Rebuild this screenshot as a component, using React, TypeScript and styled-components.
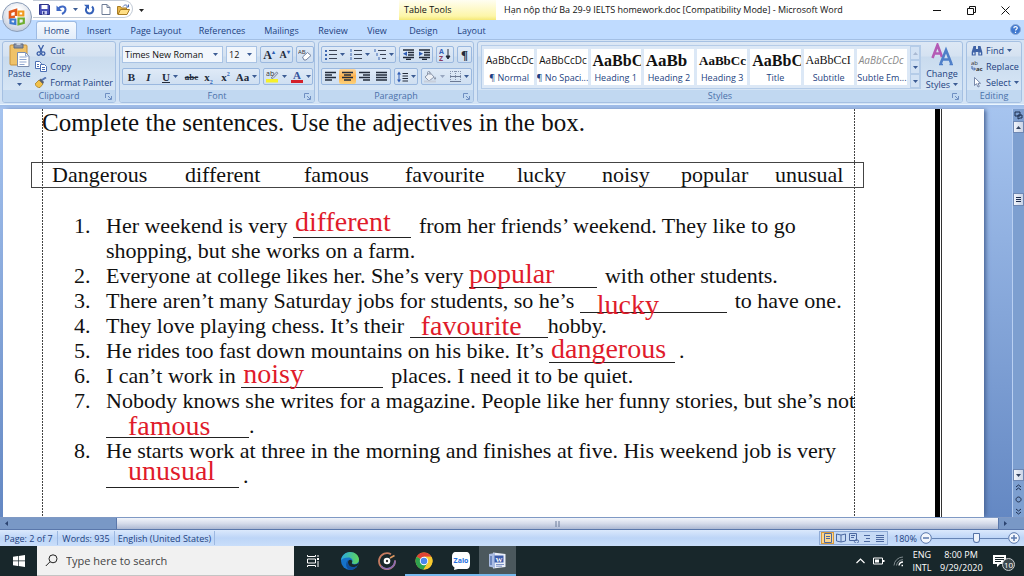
import React from "react";
import styled, { createGlobalStyle, css } from "styled-components";

const ui = `"Open Sans", "Noto Sans", sans-serif`;
const serif = `"Liberation Serif", "Times New Roman", serif`;
const navy = "#1d3f80";

const GlobalStyle = createGlobalStyle`
  * { box-sizing: border-box; }
  body { margin: 0; background: #8fb0df; font-family: ${ui}; font-size: 9px; color: ${navy}; }
  button, input, select { font: inherit; color: inherit; margin: 0; }
  button { padding: 0; border: 0; background: none; }
  svg { display: block; flex: none; }
`;

const Shell = styled.div`
  display: flex;
  flex-direction: column;
  min-height: 100vh;
`;

/* ---------- title bar and tabs ---------- */

const Header = styled.header`
  position: relative;
`;

const TitleBar = styled.div`
  display: flex;
  height: 20px;
  background: #fff;
  color: #111;
`;

const QuickAccess = styled.div`
  display: flex;
  align-items: center;
  gap: 6px;
  width: 100px;
  height: 18px;
  margin-left: 33px;
  padding-left: 6px;
  border: 1px solid #c3cbd6;
  border-left: 0;
  border-radius: 0 9px 9px 0;
`;

const QuickMore = styled.button`
  width: 16px;
  display: grid;
  place-items: center;
`;

const OfficeButton = styled.button`
  position: absolute;
  left: 2px;
  top: 2px;
  width: 30px;
  height: 30px;
  border-radius: 50%;
  border: 1px solid #8b9db8;
  background: radial-gradient(circle at 50% 35%, #ffffff 20%, #d9dee8 60%, #aab8cf);
  display: grid;
  place-items: center;
`;

const ContextTitle = styled.div`
  width: 97px;
  margin-left: 250px;
  padding-left: 5px;
  line-height: 20px;
  background: linear-gradient(#fffef2, #fdf6a9 80%, #f4e878);
`;

const WindowTitle = styled.h1`
  flex: 1;
  margin: 0;
  padding-left: 8px;
  font-size: 9px;
  font-weight: 400;
  line-height: 20px;
  white-space: nowrap;
`;

const WindowButtons = styled.div`
  display: flex;
  align-items: center;
  gap: 25px;
  padding-right: 14px;
`;

const TabBar = styled.nav`
  display: flex;
  align-items: flex-end;
  height: 19px;
  padding: 0 3px 0 36px;
  background: #bfdbff;
`;

const Tab = styled.button<{ $w: number; $active?: boolean }>`
  width: ${(p) => p.$w}px;
  height: 18px;
  white-space: nowrap;
  ${(p) =>
    p.$active &&
    css`
      background: linear-gradient(#f6faff, #e2edfa);
      border: 1px solid #9dbbe4;
      border-bottom: 0;
      border-radius: 3px 3px 0 0;
    `}
`;

const Spacer = styled.div`
  flex: 1;
`;

const HelpButton = styled.button`
  align-self: center;
`;

/* ---------- ribbon ---------- */

const Ribbon = styled.div`
  display: flex;
  gap: 3px;
  height: 66px;
  padding: 1px 2px;
  background: #d3e3f5;
  border-top: 1px solid #a3bfe4;
  border-bottom: 1px solid #e9f5ff;
`;

const RibbonEdge = styled.div`
  height: 4px;
  background: linear-gradient(#9dbce8, #a9c4ee);
`;

const Group = styled.section<{ $w?: number }>`
  display: flex;
  flex-direction: column;
  ${(p) => (p.$w ? `width: ${p.$w}px; flex: none;` : "flex: 1; min-width: 0;")}
  border: 1px solid #a5c0e2;
  border-radius: 3px;
  overflow: hidden;
  background: linear-gradient(#dde8f5 0, #d5e2f1 14px, #c9dbee 15px, #dbe9f8);
`;

const GroupBody = styled.div`
  flex: 1;
  display: flex;
  padding: 0 2px;
`;

const GroupLabel = styled.div`
  position: relative;
  height: 12px;
  line-height: 12px;
  text-align: center;
  background: #c1d8f1;
  color: #4a70aa;
`;

const Launcher = styled.button`
  position: absolute;
  right: 3px;
  top: 3px;
`;

const Stack = styled.div<{ $gap?: number; $pad?: string }>`
  display: flex;
  flex-direction: column;
  gap: ${(p) => p.$gap ?? 0}px;
  padding: ${(p) => p.$pad ?? "0"};
`;

const Row = styled.div<{ $gap?: number }>`
  display: flex;
  gap: ${(p) => p.$gap ?? 3}px;
`;

const BigButton = styled.button<{ $w: number }>`
  display: flex;
  flex-direction: column;
  align-items: center;
  width: ${(p) => p.$w}px;
  line-height: 11px;
  > svg:first-child { margin: 1px 0; }
  > svg:last-child { margin-top: 4px; }
`;

const ButtonArrow = styled.span`
  display: grid;
  place-items: center;
`;

const ItemButton = styled.button`
  display: flex;
  align-items: center;
  gap: 3px;
  height: 16px;
  white-space: nowrap;
  > svg:first-child { width: 12px; }
`;

const Box = styled.div`
  display: flex;
  height: 17px;
  border: 1px solid #9ab8df;
  border-radius: 2px;
  background: linear-gradient(#dfeaf7, #cfdff1);
`;

const Tool = styled.button<{ $w?: number; $on?: boolean }>`
  display: flex;
  align-items: center;
  justify-content: center;
  gap: 3px;
  width: ${(p) => p.$w ?? 17}px;
  height: 15px;
  color: #222b3a;
  ${(p) => p.$on && "background: linear-gradient(#fdd9a0, #fbb04c 50%, #fdd27b); border-radius: 2px;"}
`;

const Glyph = styled.span<{ $bold?: boolean; $italic?: boolean; $line?: string; $size?: number }>`
  font-family: ${serif};
  font-size: ${(p) => p.$size ?? 11}px;
  line-height: 12px;
  font-weight: ${(p) => (p.$bold ? 700 : 400)};
  font-style: ${(p) => (p.$italic ? "italic" : "normal")};
  text-decoration: ${(p) => p.$line ?? "none"};
  sup, sub { font-size: 6px; line-height: 0; color: #2b5fb5; }
`;

const SelectWrap = styled.label<{ $w: number }>`
  display: flex;
  align-items: center;
  position: relative;
  width: ${(p) => p.$w}px;
  height: 17px;
  background: #f1f6fc;
  border: 1px solid #a9c3e4;
  select {
    appearance: none;
    width: 100%;
    height: 15px;
    padding: 0 2px;
    border: 0;
    background: none;
    color: #111;
  }
  svg { position: absolute; right: 4px; pointer-events: none; }
`;

const Gallery = styled.div`
  flex: 1;
  min-width: 0;
  display: flex;
  gap: 3px;
  height: 44px;
  padding-left: 2px;
  margin: 3px 3px 0 1px;
  border: 1px solid #b5cce8;
  background: #dce8f6;
`;

const StyleCard = styled.button`
  display: flex;
  flex-direction: column;
  align-items: center;
  flex: 1 1 0;
  min-width: 0;
  height: 36px;
  margin-top: 3px;
  background: #fff;
  overflow: hidden;
  white-space: nowrap;
  line-height: 12px;
`;

const Sample = styled.span<{ $size: number; $serif?: boolean; $bold?: boolean; $soft?: boolean }>`
  width: 100%;
  padding-left: 2px;
  height: 23px;
  line-height: 23px;
  text-align: left;
  overflow: hidden;
  font-size: ${(p) => p.$size}px;
  font-family: ${(p) => (p.$serif ? serif : ui)};
  font-weight: ${(p) => (p.$bold ? 700 : 400)};
  color: ${(p) => (p.$soft ? "#8a8a8a" : "#111")};
  font-style: ${(p) => (p.$soft ? "italic" : "normal")};
`;

const GalleryScroll = styled.div`
  display: flex;
  flex-direction: column;
  width: 10px;
  button {
    flex: 1;
    display: grid;
    place-items: center;
    border: 1px solid #b5cce8;
    background: #d3e2f4;
  }
`;

/* ---------- document ---------- */

const Workspace = styled.main`
  flex: 1;
  display: flex;
  background: linear-gradient(#a6c4ef, #6488c3);
`;

const Page = styled.article`
  flex: 1;
  min-width: 0;
  display: flex;
  margin-left: 3px;
  background: #fff;
  color: #111;
  font-family: ${serif};
  font-size: 22px;
  line-height: 25px;
  box-shadow: 3px 0 4px -1px #4b6798;
`;

const LeftMargin = styled.div`
  width: 39px;
`;

const dots = "repeating-linear-gradient(#444 0 2px, #fff 2px 3px)";

const TextColumn = styled.div`
  flex: 1;
  min-width: 0;
  padding: 0 1px 0 0;
  background: ${dots} left / 1px 100% no-repeat, ${dots} right / 1px 100% no-repeat;
`;

const RightMargin = styled.div`
  width: 80px;
`;

const PageRule = styled.div`
  width: 7px;
  margin-right: 42px;
  border-left: 5px solid #000;
  border-right: 1px solid #333;
`;

const DocHeading = styled.h2`
  margin: 0 0 25px;
  font-size: 25px;
  line-height: 28px;
  font-weight: 400;
  white-space: nowrap;
`;

const WordBox = styled.div`
  display: grid;
  grid-template-columns: 133fr 119fr 101fr 112fr 85fr 79fr 94fr 69fr;
  margin: 0 -10px 25px -11px;
  padding: 0 19px 0 20px;
  border: 1px solid #444;
  line-height: 24px;
`;

const Exercises = styled.ol`
  list-style: none;
  margin: 0;
  padding: 0 0 0 32px;
`;

const Exercise = styled.li`
  display: flex;
  white-space: nowrap;
`;

const Num = styled.span`
  flex: none;
  width: 32px;
`;

const Blank = styled.span<{ $w: number }>`
  position: relative;
  display: inline-block;
  vertical-align: top;
  width: ${(p) => p.$w}px;
  height: 25px;
  border-bottom: 1px solid #222;
`;

const Answer = styled.span<{ $x: number; $y: number }>`
  position: absolute;
  left: ${(p) => p.$x}px;
  top: ${(p) => p.$y}px;
  font-size: 28px;
  line-height: 25px;
  color: #e01b2b;
`;

const Gap = styled.span<{ $w: number }>`
  display: inline-block;
  width: ${(p) => p.$w}px;
`;

const VScroll = styled.div`
  display: flex;
  flex-direction: column;
  align-items: center;
  flex: none;
  width: 12px;
  margin-left: 28px;
  border-left: 1px solid #b9d0f2;
  background: #7d9fd0;
`;

const ScrollButton = styled.button<{ $flat?: boolean }>`
  display: grid;
  place-items: center;
  width: 11px;
  height: 12px;
  ${(p) => !p.$flat && "border: 1px solid #6d87b3; background: linear-gradient(90deg, #f1f4fa, #c9d3e6);"}
  color: #33425e;
`;

const Thumb = styled(ScrollButton)`
  height: 13px;
  margin: 60px 0 auto;
`;

const HScroll = styled.div`
  display: flex;
  height: 13px;
  padding-right: 13px;
  background: #7998c6;
  border-top: 1px solid #7f99c4;
  border-bottom: 1px solid #5a77ab;
`;

const HArrow = styled.button`
  width: 12px;
  display: grid;
  place-items: center;
`;

const HThumb = styled.button`
  flex: 1;
  display: grid;
  place-items: center;
  margin-left: 104px;
  border: solid #5a77ab;
  border-width: 0 1px;
  background: linear-gradient(#f2f5fb, #d5dbea 50%, #adb9d3);
`;

/* ---------- status bar and taskbar ---------- */

const StatusBar = styled.footer`
  display: flex;
  align-items: center;
  height: 16px;
  padding-right: 4px;
  background: linear-gradient(#dbe9fc, #bdd5f7 50%, #c9defa);
`;

const StatusItem = styled.button<{ $w: number }>`
  width: ${(p) => p.$w}px;
  height: 14px;
  border-right: 1px solid #9db9e2;
  white-space: nowrap;
`;

const StatusZoom = styled.span`
  width: 26px;
`;

const Views = styled.div`
  display: flex;
  align-items: center;
  height: 14px;
  padding: 0 1px;
  border: 1px solid #8fabd6;
  background: #c6daf5;
  margin-right: 6px;
`;

const View = styled.button<{ $on?: boolean }>`
  display: grid;
  place-items: center;
  width: 13px;
  height: 12px;
  ${(p) => p.$on && "background: #fbd690; border: 1px solid #d79a3c;"}
`;

const ZoomRange = styled.input`
  appearance: none;
  width: 76px;
  height: 11px;
  background: linear-gradient(#6684b5, #6684b5) center / 100% 1px no-repeat;
  &::-webkit-slider-thumb {
    appearance: none;
    width: 7px;
    height: 10px;
    border: 1px solid #5573a6;
    border-radius: 1px 1px 4px 4px;
    background: #eef3fb;
  }
`;

const Taskbar = styled.footer`
  display: flex;
  height: 30px;
  background: #18272b;
  color: #fff;
`;

const TaskButton = styled.button<{ $open?: boolean; $active?: boolean }>`
  display: grid;
  place-items: center;
  width: 37px;
  height: 30px;
  padding-bottom: 1px;
  background: ${(p) => (p.$active ? "#4b585d" : "none")};
  ${(p) => p.$open && "box-shadow: inset 0 -2px #76b9ed;"}
`;

const Search = styled.label`
  display: flex;
  align-items: center;
  gap: 8px;
  width: 257px;
  padding-left: 8px;
  background: #f1f1f1;
  border-bottom: 1px solid #c4c4c4;
  input {
    flex: 1;
    min-width: 0;
    border: 0;
    padding: 0;
    background: none;
    font-size: 11px;
    color: #333;
  }
  input::placeholder { color: #444; opacity: 1; }
`;

const Tasks = styled.div`
  display: flex;
`;

const Tray = styled.div`
  display: flex;
  align-items: center;
  gap: 8px;
`;

const TrayText = styled.div<{ $w: number }>`
  width: ${(p) => p.$w}px;
  text-align: center;
  line-height: 13px;
  white-space: nowrap;
`;

const Notice = styled.button`
  position: relative;
  width: 22px;
  height: 26px;
  margin-left: 3px;
  margin-right: 9px;
`;

const Count = styled.span`
  position: absolute;
  right: 0;
  bottom: 3px;
  width: 13px;
  height: 13px;
  border: 1px solid #c9cdd0;
  border-radius: 50%;
  background: #3c474b;
  color: #fff;
  font-size: 8px;
  line-height: 11px;
  text-align: center;
`;

/* ---------- icons ---------- */

const Arrow = ({ up, c = "#3c5c94" }: { up?: boolean; c?: string }) => (
  <svg width="5" height="3" viewBox="0 0 5 3"><path d={up ? "M0 3L2.5 0L5 3z" : "M0 0H5L2.5 3z"} fill={c} /></svg>
);

const OfficeLogo = () => (
  <svg width="20" height="20" viewBox="0 0 20 20" fill="none" strokeWidth="2.6">
    <path d="M8 9.500L3 10.500V5l6-2v6" stroke="#e2591c" />
    <path d="M11.500 8.500V4.500h4.800v4z" stroke="#f09a1d" strokeWidth="2.2" />
    <path d="M3.500 12.500h4.800v4.500l-4.800-1z" stroke="#3c79cf" strokeWidth="2.2" />
    <path d="M11.500 11.500h5.300v4.500l-5.300 1.300z" stroke="#6fae2f" strokeWidth="2.2" />
  </svg>
);

const SaveIcon = () => (
  <svg width="11" height="11" viewBox="0 0 11 11">
    <path d="M.5.5h9l1 1v9h-10z" fill="#4a51b8" stroke="#2d3488" /><path d="M2.500 1h6v4h-6z" fill="#fff" />
    <path d="M3 7h5v3.500H3z" fill="#c8cdf2" /><path d="M4 7.500h1.500v2.500H4z" fill="#2d3488" />
  </svg>
);
const UndoIcon = () => (
  <svg width="11" height="11" viewBox="0 0 11 11" fill="none">
    <path d="M2.500 4.500C5 1.500 9.500 2 9.500 5.500c0 2-1.500 3.500-3.500 4.500" stroke="#3f68c4" strokeWidth="2" />
    <path d="M.5 1.500v5.500H6z" fill="#3f68c4" />
  </svg>
);
const RedoIcon = () => (
  <svg width="11" height="11" viewBox="0 0 11 11" fill="none">
    <path d="M8 2.500C10.500 5 9 9.500 5.500 9.500S1 5.500 3 3" stroke="#3561b8" strokeWidth="2" />
    <path d="M0 .8h5v5z" fill="#3561b8" />
  </svg>
);
const NewIcon = () => (
  <svg width="10" height="11" viewBox="0 0 10 11"><path d="M1 .5h5l3 3v7H1z" fill="#fff" stroke="#6e7d96" /><path d="M6 .5v3h3" fill="none" stroke="#6e7d96" /></svg>
);
const OpenIcon = () => (
  <svg width="13" height="11" viewBox="0 0 13 11">
    <path d="M.5 10V2.500h3l1 1.500h5V10z" fill="#e8b64a" stroke="#a97c22" /><path d="M1 10.500L3.500 5.500H12.500L10 10.500z" fill="#ffdf85" stroke="#a97c22" />
    <path d="M6 2.500C7.500.5 9.500.5 11 2.500M11.500.5v2.500H9" fill="none" stroke="#4b6bb0" />
  </svg>
);
const PasteIcon = () => (
  <svg width="21" height="24" viewBox="0 0 21 24">
    <rect x="1" y="2" width="17" height="20" rx="1" fill="#f0c268" stroke="#c8923a" />
    <path d="M5 1h9v4H5z" fill="#8a94a8" stroke="#5f6a80" /><path d="M7.500 0h4v2h-4z" fill="#c9cfda" />
    <path d="M8.500 9.500h8l3.500 3.500v10.500H8.500z" fill="#fff" stroke="#7c8dad" />
    <path d="M16.500 9.500V13H20M10.500 14h7M10.500 16.500h7M10.500 19h7M10.500 21.500h5" fill="none" stroke="#8fa6cf" />
  </svg>
);
const CutIcon = () => (
  <svg width="10" height="11" viewBox="0 0 10 11" fill="none" stroke="#3b5fa8">
    <path d="M2.500 0L6 7M7.500 0L4 7" strokeWidth="1.300" /><circle cx="2.800" cy="8.600" r="1.700" strokeWidth="1.300" /><circle cx="7.200" cy="8.600" r="1.700" strokeWidth="1.300" />
  </svg>
);
const CopyIcon = () => (
  <svg width="12" height="11" viewBox="0 0 12 11" fill="#fff" stroke="#4c6fb3">
    <path d="M.5.5h4l2 2v5h-6z" /><path d="M5.500 3.500h4l2 2v5h-6z" /><path d="M2 3.500h2M2 5.500h2M7 6.500h3M7 8.500h3" />
  </svg>
);
const BrushIcon = () => (
  <svg width="12" height="11" viewBox="0 0 12 11">
    <path d="M0 7l4-4 4 4-3 3.500C3 11 1 9.500 0 7z" fill="#f2c14a" stroke="#a77d22" strokeWidth=".8" />
    <path d="M4 3l2-1.500L9 5 8 7z" fill="#555f75" /><path d="M7 3l4-2.500" stroke="#5575b5" strokeWidth="2" />
  </svg>
);
const LaunchIcon = () => (
  <svg width="7" height="7" viewBox="0 0 7 7" fill="none" stroke="#6f8fc2"><path d="M.5 5V.5H5M3 3l3 3M6.500 3v3.500H3" /></svg>
);
const EraserIcon = () => (
  <svg width="14" height="13" viewBox="0 0 14 13">
    <text x="0" y="6" fontSize="6" fontFamily="Open Sans" fill="#333">AB</text>
    <path d="M4.500 9l5-4.500 3.500 3-5 4.500H6z" fill="#fff" stroke="#7483a2" />
  </svg>
);
const HighlightIcon = () => (
  <svg width="13" height="13" viewBox="0 0 13 13">
    <text x="0" y="6" fontSize="7" fontFamily="Open Sans" fill="#333">ab</text>
    <path d="M5 8l5.500-6 1.500 1.200L7 8.500z" fill="#cbd3e2" stroke="#5f6c86" strokeWidth=".7" /><path d="M0 9h12v3.500H0z" fill="#f6f02a" />
  </svg>
);
const FontColorIcon = () => (
  <svg width="12" height="13" viewBox="0 0 12 13">
    <text x="6" y="9" fontSize="11" fontWeight="700" fontFamily="Liberation Serif" fill="#35549c" textAnchor="middle">A</text>
    <path d="M0 10h12v3H0z" fill="#d3202a" />
  </svg>
);
const Lines = ({ rows, c = "#222b3a" }: { rows: [number, number][]; c?: string }) => (
  <svg width="11" height="11" viewBox="0 0 11 11" stroke={c} strokeWidth="1.300">
    {rows.map(([a, b], i) => <path key={i} d={`M${a} ${1.5 + i * 2.5}H${b}`} />)}
  </svg>
);
const ListIcon = ({ kind }: { kind: "dot" | "num" | "multi" }) => (
  <svg width="12" height="11" viewBox="0 0 12 11">
    {[0, 1, 2].map((i) => {
      const off = kind === "multi" ? i * 2 : 0;
      return (
        <g key={i}>
          {kind === "dot" ? <rect x="0" y={1 + i * 4} width="2" height="2" fill="#3c66b0" /> : <path d={`M${off + 1} ${i * 4}v3`} stroke="#3c66b0" />}
          <path d={`M${off + 4} ${1.5 + i * 4}H12`} stroke="#3a4354" />
        </g>
      );
    })}
  </svg>
);
const IndentIcon = ({ right }: { right?: boolean }) => (
  <svg width="12" height="11" viewBox="0 0 12 11">
    <path d="M1 1h11M6 3.500h6M6 6h6M1 8.500h11M4 10.500h5" stroke="#222b3a" strokeWidth="1.300" />
    <path d={right ? "M1 2.500L5 4.800L1 7z" : "M5 2.500L1 4.800L5 7z"} fill="#2f5db4" />
  </svg>
);
const SortIcon = () => (
  <svg width="12" height="13" viewBox="0 0 12 13">
    <text x="0" y="6" fontSize="7" fontWeight="700" fontFamily="Open Sans" fill="#3561b8">A</text>
    <text x="0" y="12.500" fontSize="7" fontWeight="700" fontFamily="Open Sans" fill="#8b3a5f">Z</text>
    <path d="M9 1v9M7 8l2 3 2-3z" stroke="#222b3a" fill="#222b3a" />
  </svg>
);
const SpacingIcon = () => (
  <svg width="11" height="12" viewBox="0 0 11 12">
    <path d="M2 2v8" stroke="#2f5db4" /><path d="M0 3.500L2 .5l2 3zM0 8.500l2 3 2-3z" fill="#2f5db4" />
    <path d="M5.500 2.500H11M5.500 5H11M5.500 7.500H11M5.500 10H11" stroke="#222b3a" />
  </svg>
);
const BucketIcon = () => (
  <svg width="13" height="12" viewBox="0 0 13 12">
    <path d="M1 6l5-4.500L10 6l-5 4z" fill="#eef1f6" stroke="#8c97ab" /><path d="M3.500 4V1.500C3.500 0 6 0 6 1.500V4" fill="none" stroke="#8c97ab" />
    <path d="M11 5.500c1.500 2 1.500 3 0 3s-1.200-1 0-3z" fill="#8c97ab" /><path d="M0 10.500h12" stroke="#c8cfdc" strokeWidth="2" />
  </svg>
);
const BorderIcon = () => (
  <svg width="11" height="11" viewBox="0 0 11 11" fill="none">
    <path d="M.5 0v11M5.500 0v11M10.500 0v11M0 .5h11M0 5.500h11" stroke="#8593ad" strokeDasharray="1 1" /><path d="M0 10.500h11M0 5.500h11" stroke="#6c7a94" />
  </svg>
);
const StylesIcon = () => (
  <svg width="22" height="24" viewBox="0 0 22 24">
    <g fill="none" strokeWidth="2.600">
      <path d="M1.500 15L6.500 2L11 14M3 10.500h6.500" stroke="#b45bb5" />
      <path d="M9.500 21L15 7l5.500 14M11.500 16.500h7" stroke="#4f7fc9" />
    </g>
    <path d="M8 21.500h4M18.500 21.500H22" stroke="#4f7fc9" strokeWidth="1.300" />
  </svg>
);
const FindIcon = () => (
  <svg width="11" height="11" viewBox="0 0 11 11" fill="#3e62a6">
    <path d="M2 1h2.500v3h2V1H9l1.800 6v3.500H6.800V7H4.200v3.500H.2V7z" /><path d="M1.500 7.500h1.500v2H1.500zM8 7.500h1.500v2H8z" fill="#d7e3f4" />
  </svg>
);
const ReplaceIcon = () => (
  <svg width="12" height="12" viewBox="0 0 12 12">
    <text x="0" y="5" fontSize="6" fontFamily="Open Sans" fill="#333">ab</text>
    <text x="5" y="11" fontSize="6" fontWeight="700" fontFamily="Open Sans" fill="#333">ac</text>
    <path d="M1 6v3h3M3 7.500L4.500 9 3 10.500" fill="none" stroke="#3e62a6" />
  </svg>
);
const SelectIcon = () => (
  <svg width="11" height="11" viewBox="0 0 11 11"><path d="M3 .5v8l2-1.800L6.500 10l1.300-.6L6.500 6.300H9z" fill="#fff" stroke="#5c6f95" strokeWidth=".8" /></svg>
);
const BrowseIcon = ({ d }: { d: string }) => (
  <svg width="9" height="9" viewBox="0 0 9 9" fill="none" stroke="#1f2f4f"><path d={d} /></svg>
);
const PageView = ({ d }: { d: string }) => (
  <svg width="10" height="10" viewBox="0 0 10 10" fill="none" stroke="#4b68a0"><path d={d} /></svg>
);
const ZoomIcon = ({ plus }: { plus?: boolean }) => (
  <svg width="12" height="12" viewBox="0 0 12 12" fill="#f2f6fc" stroke="#5b79ac"><circle cx="6" cy="6" r="5.300" /><path d={plus ? "M3 6h6M6 3v6" : "M3 6h6"} strokeWidth="1.500" /></svg>
);
const EdgeIcon = () => (
  <svg width="18" height="18" viewBox="0 0 18 18">
    <defs>
      <linearGradient id="eg" x1="0" x2="1"><stop offset="0" stopColor="#2aa7e0" /><stop offset="1" stopColor="#5fd65a" /></linearGradient>
    </defs>
    <circle cx="9" cy="9" r="9" fill="#1673c9" />
    <path d="M0 8.500C.5 3.500 4.500 0 9 0c5 0 9 3.500 9 7.500 0 2.800-2 4.500-4.500 4.500-2 0-3-1-2.300-2C12.500 8 10.500 5.500 7.500 5.500 4 5.500 1 6.500 0 8.500z" fill="url(#eg)" />
    <path d="M7.500 7.500c-2 3 0 7.500 4.500 7.500 2 0 3.500-.5 5-2-1.500 3.500-4.500 5-8 5-4-1-5.500-7-1.500-10.500z" fill="#0f4f9e" />
    <path d="M11 10.500c-.8 1 .5 2 2.500 2 2 0 3.200-.8 4.300-2.200l-.8 2.700c-1.500 1.500-3 2-5 2-3 0-5-2-5-4.500 0-1.500.8-2.800 2.300-2.700 1.500.1 2.500 1.500 1.700 2.700z" fill="#18272b" />
  </svg>
);
const MusicIcon = () => (
  <svg width="18" height="18" viewBox="0 0 18 18" fill="none">
    <path d="M13 2.200A8 8 0 1 0 17 8.500" stroke="#c77c62" strokeWidth="1.800" /><path d="M17 8.500A8 8 0 0 1 3 14" stroke="#8a6bb0" strokeWidth="1.800" />
    <path d="M16.500 3.500L12 6" stroke="#e09a62" strokeWidth="1.500" /><circle cx="9" cy="9" r="3.300" fill="#fff" /><circle cx="9" cy="9" r="1.200" fill="#333" />
  </svg>
);
const ChromeIcon = () => (
  <svg width="18" height="18" viewBox="0 0 18 18">
    <circle cx="9" cy="9" r="8.500" fill="#f7c92f" />
    <path d="M9 9L1.640 4.750A8.500 8.500 0 0 1 16.400 4.800H9z" fill="#de4437" />
    <path d="M9 9l-7.360-4.250A8.500 8.500 0 0 0 8.500 17.480L12.700 11z" fill="#2fa24f" />
    <path d="M9 4.800h7.400A8.500 8.500 0 0 1 8.500 17.480L12.700 11z" fill="#f7c92f" />
    <circle cx="9" cy="9" r="4.200" fill="#fff" /><circle cx="9" cy="9" r="3.300" fill="#4a87ee" />
  </svg>
);
const ZaloIcon = () => (
  <svg width="18" height="18" viewBox="0 0 18 18">
    <path d="M4 0h10c3 0 4 2 4 5v7c0 3-1 5-4 5H6l-4 1 .5-2.500C.5 14 0 13 0 12V5c0-3 1-5 4-5z" fill="#fff" />
    <text x="9" y="11" fontSize="7" fontWeight="700" fontFamily="Open Sans" fill="#1f6ee0" textAnchor="middle">Zalo</text>
  </svg>
);
const WordIcon = () => (
  <svg width="17" height="17" viewBox="0 0 17 17">
    <path d="M4 .5L16.500 2v13L4 16.500z" fill="#e9eef8" /><path d="M0 2l6-1v15l-6-1.500z" fill="#a9bce3" />
    <path d="M2 4v9" stroke="#35549c" /><path d="M5.500 3.500h9v7h-9z" fill="#3c5dab" />
    <text x="10" y="9.500" fontSize="7" fontWeight="700" fontFamily="Liberation Serif" fill="#fff" textAnchor="middle">W</text>
    <path d="M7 12.500h8M7 14.200h6" stroke="#7c92c6" />
  </svg>
);

/* ---------- data ---------- */

const tabs: [string, number][] = [
  ["Home", 41], ["Insert", 44], ["Page Layout", 70], ["References", 62], ["Mailings", 57],
  ["Review", 46], ["View", 42], ["Design", 51], ["Layout", 45],
];

const styleCards = [
  { name: "¶ Normal", text: "AaBbCcDc", size: 10 },
  { name: "¶ No Spaci...", text: "AaBbCcDc", size: 10 },
  { name: "Heading 1", text: "AaBbC", size: 16, serif: true, bold: true },
  { name: "Heading 2", text: "AaBb", size: 17, serif: true, bold: true },
  { name: "Heading 3", text: "AaBbCc", size: 13, serif: true, bold: true },
  { name: "Title", text: "AaBbC", size: 16, serif: true, bold: true },
  { name: "Subtitle", text: "AaBbCcI", size: 12, serif: true },
  { name: "Subtle Em...", text: "AaBbCcDc", size: 10, soft: true },
];

const words = ["Dangerous", "different", "famous", "favourite", "lucky", "noisy", "popular", "unusual"];

interface FillProps { w: number; x: number; y: number; children: string }
const Fill = ({ w, x, y, children }: FillProps) => (
  <Blank $w={w}><Answer $x={x} $y={y}>{children}</Answer></Blank>
);

const exercises: React.ReactNode[] = [
  <>Her weekend is very <Fill w={118} x={2} y={-4}>different</Fill><Gap $w={8} />from her friends’ weekend. They like to go<br />shopping, but she works on a farm.</>,
  <>Everyone at college likes her. She’s very <Fill w={128} x={0} y={-2}>popular</Fill><Gap $w={8} />with other students.</>,
  <>There aren’t many Saturday jobs for students, so he’s <Fill w={147} x={17} y={4}>lucky</Fill><Gap $w={8} />to have one.</>,
  <>They love playing chess. It’s their <Fill w={138} x={11} y={0}>favourite</Fill>hobby.</>,
  <>He rides too fast down mountains on his bike. It’s <Fill w={126} x={2} y={-2}>dangerous</Fill><Gap $w={4} />.</>,
  <>I can’t work in <Fill w={142} x={2} y={-2}>noisy</Fill><Gap $w={8} />places. I need it to be quiet.</>,
  <>Nobody knows she writes for a magazine. People like her funny stories, but she’s not<br /><Fill w={143} x={22} y={0}>famous</Fill>.</>,
  <>He starts work at three in the morning and finishes at five. His weekend job is very<br /><Fill w={133} x={22} y={-5}>unusual</Fill><Gap $w={4} />.</>,
];

const Label = ({ children, launch = true }: { children: string; launch?: boolean }) => (
  <GroupLabel>{children}{launch && <Launcher aria-label={`${children} options`}><LaunchIcon /></Launcher>}</GroupLabel>
);

export default function App() {
  return (
    <Shell>
      <GlobalStyle />
      <Header>
        <TitleBar>
          <QuickAccess>
            <button aria-label="Save"><SaveIcon /></button>
            <button aria-label="Undo"><UndoIcon /></button>
            <button aria-label="Undo list"><Arrow /></button>
            <button aria-label="Redo"><RedoIcon /></button>
            <button aria-label="New"><NewIcon /></button>
            <button aria-label="Open"><OpenIcon /></button>
          </QuickAccess>
          <QuickMore aria-label="Customize"><Arrow c="#222" /></QuickMore>
          <ContextTitle>Table Tools</ContextTitle>
          <WindowTitle>Hạn nộp thứ Ba 29-9 IELTS homework.doc [Compatibility Mode] - Microsoft Word</WindowTitle>
          <WindowButtons>
            <button aria-label="Minimize"><svg width="9" height="9" viewBox="0 0 9 9"><path d="M0 4.500h8" stroke="#111" /></svg></button>
            <button aria-label="Restore"><svg width="9" height="9" viewBox="0 0 9 9" fill="none" stroke="#111"><path d="M.5 2.500h6v6h-6zM2.500 2.500v-2h6v6h-2" /></svg></button>
            <button aria-label="Close"><svg width="9" height="9" viewBox="0 0 9 9" stroke="#111"><path d="M.5.5l8 8M8.500.5l-8 8" /></svg></button>
          </WindowButtons>
        </TitleBar>
        <TabBar>
          {tabs.map(([t, w], i) => <Tab key={t} $w={w} $active={i === 0}>{t}</Tab>)}
          <Spacer />
          <HelpButton aria-label="Help">
            <svg width="11" height="11" viewBox="0 0 11 11"><circle cx="5.500" cy="5.500" r="5" fill="#3f78cf" stroke="#8cabd8" /><path d="M3.800 4.300c0-2.300 3.500-2.100 3.500-.2 0 1.200-1.700 1.200-1.700 2.500M5.500 7.700v1.200" stroke="#fff" fill="none" strokeWidth="1.200" /></svg>
          </HelpButton>
        </TabBar>
        <OfficeButton aria-label="Office menu"><OfficeLogo /></OfficeButton>
      </Header>

      <Ribbon>
        <Group $w={114}>
          <GroupBody>
            <BigButton $w={34}><PasteIcon /><span>Paste</span><Arrow /></BigButton>
            <Stack $pad="0 0 0 2px">
              <ItemButton><CutIcon />Cut</ItemButton>
              <ItemButton><CopyIcon />Copy</ItemButton>
              <ItemButton><BrushIcon />Format Painter</ItemButton>
            </Stack>
          </GroupBody>
          <Label>Clipboard</Label>
        </Group>

        <Group $w={196}>
          <GroupBody>
            <Stack $gap={5} $pad="4px 0 0 0">
              <Row>
                <SelectWrap $w={101}><select aria-label="Font"><option>Times New Roman</option></select><Arrow /></SelectWrap>
                <SelectWrap $w={31}><select aria-label="Font size"><option>12</option></select><Arrow /></SelectWrap>
                <Box>
                  <Tool $w={16} aria-label="Grow font"><Glyph $bold $size={12}>A<sup>▴</sup></Glyph></Tool>
                  <Tool $w={15} aria-label="Shrink font"><Glyph $bold $size={10}>A<sup>▾</sup></Glyph></Tool>
                </Box>
                <Box><Tool $w={16} aria-label="Clear formatting"><EraserIcon /></Tool></Box>
              </Row>
              <Row>
                <Box>
                  <Tool aria-label="Bold"><Glyph $bold>B</Glyph></Tool>
                  <Tool aria-label="Italic"><Glyph $italic $bold>I</Glyph></Tool>
                  <Tool $w={26} aria-label="Underline"><Glyph $line="underline" $bold>U</Glyph><Arrow /></Tool>
                  <Tool aria-label="Strikethrough"><Glyph $line="line-through" $size={9} $bold>abc</Glyph></Tool>
                  <Tool aria-label="Subscript"><Glyph $bold>x<sub>2</sub></Glyph></Tool>
                  <Tool aria-label="Superscript"><Glyph $bold>x<sup>2</sup></Glyph></Tool>
                  <Tool $w={25} aria-label="Change case"><Glyph $bold>Aa</Glyph><Arrow /></Tool>
                </Box>
                <Box>
                  <Tool $w={25} aria-label="Highlight"><HighlightIcon /><Arrow /></Tool>
                  <Tool $w={23} aria-label="Font color"><FontColorIcon /><Arrow /></Tool>
                </Box>
              </Row>
            </Stack>
          </GroupBody>
          <Label>Font</Label>
        </Group>

        <Group $w={156}>
          <GroupBody>
            <Stack $gap={5} $pad="4px 0 0 0">
              <Row>
                <Box>
                  <Tool $w={25} aria-label="Bullets"><ListIcon kind="dot" /><Arrow /></Tool>
                  <Tool $w={25} aria-label="Numbering"><ListIcon kind="num" /><Arrow /></Tool>
                  <Tool $w={23} aria-label="Multilevel list"><ListIcon kind="multi" /><Arrow /></Tool>
                </Box>
                <Box>
                  <Tool $w={16} aria-label="Decrease indent"><IndentIcon /></Tool>
                  <Tool $w={16} aria-label="Increase indent"><IndentIcon right /></Tool>
                </Box>
                <Box><Tool $w={16} aria-label="Sort"><SortIcon /></Tool></Box>
                <Box><Tool $w={13} aria-label="Show marks"><Glyph $bold $size={13}>¶</Glyph></Tool></Box>
              </Row>
              <Row>
                <Box>
                  <Tool aria-label="Align left"><Lines rows={[[0, 11], [0, 7], [0, 11], [0, 7]]} /></Tool>
                  <Tool $on aria-label="Center"><Lines rows={[[0, 11], [2, 9], [0, 11], [2, 9]]} /></Tool>
                  <Tool aria-label="Align right"><Lines rows={[[0, 11], [4, 11], [0, 11], [4, 11]]} /></Tool>
                  <Tool aria-label="Justify"><Lines rows={[[0, 11], [0, 11], [0, 11], [0, 11]]} /></Tool>
                </Box>
                <Box><Tool $w={22} aria-label="Line spacing"><SpacingIcon /><Arrow /></Tool></Box>
                <Box>
                  <Tool $w={25} aria-label="Shading"><BucketIcon /><Arrow c="#98a6bf" /></Tool>
                  <Tool $w={24} aria-label="Borders"><BorderIcon /><Arrow /></Tool>
                </Box>
              </Row>
            </Stack>
          </GroupBody>
          <Label>Paragraph</Label>
        </Group>

        <Group>
          <GroupBody>
            <Gallery>
              {styleCards.map((s) => (
                <StyleCard key={s.name}>
                  <Sample $size={s.size} $serif={s.serif} $bold={s.bold} $soft={s.soft}>{s.text}</Sample>
                  <span>{s.name}</span>
                </StyleCard>
              ))}
              <GalleryScroll>
                <button aria-label="Previous styles"><Arrow up c="#a9b9d2" /></button>
                <button aria-label="Next styles"><Arrow /></button>
                <button aria-label="More styles"><Arrow /></button>
              </GalleryScroll>
            </Gallery>
            <BigButton $w={36}><StylesIcon /><span>Change</span><Row><span>Styles</span><ButtonArrow><Arrow /></ButtonArrow></Row></BigButton>
          </GroupBody>
          <Label>Styles</Label>
        </Group>

        <Group $w={56}>
          <GroupBody>
            <Stack $pad="0 0 0 2px">
              <ItemButton><FindIcon />Find<Arrow /></ItemButton>
              <ItemButton><ReplaceIcon />Replace</ItemButton>
              <ItemButton><SelectIcon />Select<Arrow /></ItemButton>
            </Stack>
          </GroupBody>
          <Label launch={false}>Editing</Label>
        </Group>
      </Ribbon>
      <RibbonEdge />

      <Workspace>
        <Page>
          <LeftMargin />
          <TextColumn>
            <DocHeading>Complete the sentences. Use the adjectives in the box.</DocHeading>
            <WordBox>{words.map((w) => <span key={w}>{w}</span>)}</WordBox>
            <Exercises>
              {exercises.map((e, i) => <Exercise key={i}><Num>{i + 1}.</Num><div>{e}</div></Exercise>)}
            </Exercises>
          </TextColumn>
          <RightMargin />
          <PageRule />
        </Page>
        <VScroll>
          <ScrollButton $flat aria-label="Ruler"><BrowseIcon d="M1 1h5v4H1zM4 4h4v3H6L4 8z" /></ScrollButton>
          <ScrollButton aria-label="Scroll up"><Arrow up c="#33425e" /></ScrollButton>
          <Thumb aria-label="Scroll position"><BrowseIcon d="M2 2.500h5M2 4.500h5M2 6.500h5" /></Thumb>
          <ScrollButton aria-label="Scroll down"><Arrow c="#33425e" /></ScrollButton>
          <ScrollButton $flat aria-label="Previous page"><BrowseIcon d="M2 4l2.500-2L7 4M2 7l2.500-2L7 7" /></ScrollButton>
          <ScrollButton $flat aria-label="Browse object"><BrowseIcon d="M4.500 2a2.500 2.500 0 1 0 .1 0z" /></ScrollButton>
          <ScrollButton $flat aria-label="Next page"><BrowseIcon d="M2 2l2.500 2L7 2M2 5l2.500 2L7 5" /></ScrollButton>
        </VScroll>
      </Workspace>

      <HScroll>
        <HArrow aria-label="Scroll left"><svg width="3" height="5" viewBox="0 0 3 5"><path d="M3 0v5L0 2.500z" fill="#2c4470" /></svg></HArrow>
        <HThumb aria-label="Horizontal position"><svg width="5" height="6" viewBox="0 0 5 6"><path d="M1 0v6M4 0v6" stroke="#6b7a99" /></svg></HThumb>
        <HArrow aria-label="Scroll right"><svg width="3" height="5" viewBox="0 0 3 5"><path d="M0 0v5l3-2.500z" fill="#2c4470" /></svg></HArrow>
      </HScroll>

      <StatusBar>
        <StatusItem $w={58}>Page: 2 of 7</StatusItem>
        <StatusItem $w={57}>Words: 935</StatusItem>
        <StatusItem $w={100}>English (United States)</StatusItem>
        <Spacer />
        <Views>
          <View $on aria-label="Print layout"><PageView d="M1.500.5h7v9h-7zM3 3.500h4M3 5.500h4" /></View>
          <View aria-label="Reading"><PageView d="M5 2v7M5 2L.5 1v7L5 9l4.500-1V1z" /></View>
          <View aria-label="Web layout"><PageView d="M.5.5h7v7h-7zM2 2.500h4M2 4.500h3M6 7a2 2 0 1 0 3 0z" /></View>
          <View aria-label="Outline"><PageView d="M2 2.500h6M4 5.500h4M2 8.500h6" /></View>
          <View aria-label="Draft"><PageView d="M1 2.500h8M1 4.500h8M1 6.500h8M1 8.500h8" /></View>
        </Views>
        <StatusZoom>180%</StatusZoom>
        <button aria-label="Zoom out"><ZoomIcon /></button>
        <ZoomRange type="range" aria-label="Zoom" min={0} max={100} defaultValue={60} />
        <button aria-label="Zoom in"><ZoomIcon plus /></button>
      </StatusBar>

      <Taskbar>
        <TaskButton aria-label="Start"><svg width="12" height="12" viewBox="0 0 12 12" fill="#fff"><path d="M0 1.700L5 1v4.600H0zM5.700.9L12 0v5.600H5.700zM0 6.300h5V11l-5-.7zM5.700 6.300H12V12l-6.300-.9z" /></svg></TaskButton>
        <Search>
          <svg width="13" height="13" viewBox="0 0 13 13" fill="none" stroke="#222"><circle cx="8" cy="4.800" r="4" /><path d="M5 7.800L.8 12" /></svg>
          <input type="text" placeholder="Type here to search" aria-label="Search" />
        </Search>
        <Tasks>
          <TaskButton aria-label="Task view"><svg width="12" height="12" viewBox="0 0 12 12" fill="none" stroke="#fff"><path d="M.5 0v1.500h8V0M.5 4h8v4h-8zM.5 12v-1.500h8V12M11 0v2M11 6v6" /><path d="M10 3h2v2h-2z" fill="#fff" stroke="none" /></svg></TaskButton>
          <TaskButton aria-label="Edge"><EdgeIcon /></TaskButton>
          <TaskButton aria-label="Music"><MusicIcon /></TaskButton>
          <TaskButton $open aria-label="Chrome"><ChromeIcon /></TaskButton>
          <TaskButton $open aria-label="Zalo"><ZaloIcon /></TaskButton>
          <TaskButton $open $active aria-label="Word"><WordIcon /></TaskButton>
        </Tasks>
        <Spacer />
        <Tray>
          <svg width="9" height="6" viewBox="0 0 9 6" fill="none" stroke="#fff" strokeWidth="1.200"><path d="M.5 5l4-4 4 4" /></svg>
          <svg width="12" height="8" viewBox="0 0 12 8"><path d="M.5 1h9v6h-9z" fill="none" stroke="#fff" /><path d="M10 3h1.500v2H10zM2 2.500h4v3H2z" fill="#fff" /></svg>
          <svg width="11" height="11" viewBox="0 0 11 11" fill="none"><path d="M1 9.500A9 9 0 0 1 10 1M3.500 9.500A6.500 6.500 0 0 1 10 3.700" stroke="#7f8a8e" /><path d="M6 9.500a4 4 0 0 1 4-3.500M8.500 9.500h1.500" stroke="#fff" strokeWidth="1.300" /></svg>
          <TrayText $w={20}>ENG<br />INTL</TrayText>
          <TrayText $w={42}>8:00 PM<br />9/29/2020</TrayText>
          <Notice aria-label="Notifications">
            <svg width="13" height="13" viewBox="0 0 13 13"><path d="M0 0h13v9H7l-3 3V9H0z" fill="#fff" /><path d="M2 2.500h9M2 4.500h9M2 6.500h6" stroke="#18272b" /></svg>
            <Count>10</Count>
          </Notice>
        </Tray>
      </Taskbar>
    </Shell>
  );
}
